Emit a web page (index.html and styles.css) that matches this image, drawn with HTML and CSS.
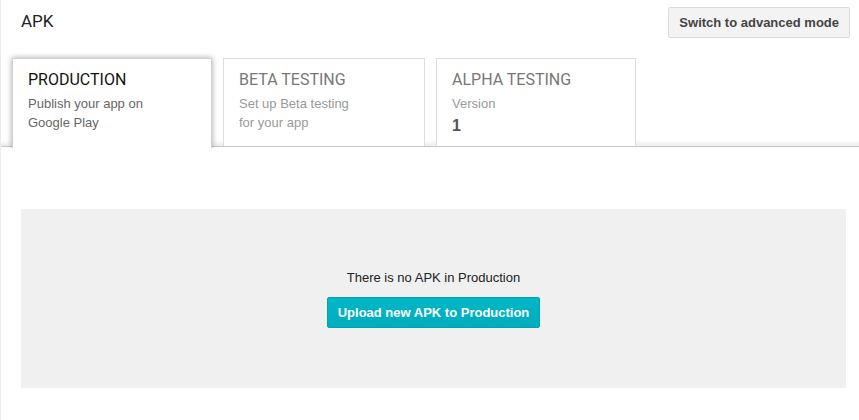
FILE: index.html
```html
<!DOCTYPE html>
<html>
<head>
<meta charset="utf-8">
<link rel="stylesheet" href="styles.css">
</head>
<body>
<div class="page">
  <div class="header">
    <h1 class="title">APK</h1>
    <button class="btn-switch">Switch to advanced mode</button>
  </div>
  <div class="tabs">
    <div class="tab active">
      <div class="tab-title">PRODUCTION</div>
      <div class="tab-sub">Publish your app on<br>Google Play</div>
    </div>
    <div class="tab beta">
      <div class="tab-title">BETA TESTING</div>
      <div class="tab-sub">Set up Beta testing<br>for your app</div>
    </div>
    <div class="tab">
      <div class="tab-title">ALPHA TESTING</div>
      <div class="tab-sub">Version</div>
      <div class="tab-num">1</div>
    </div>
  </div>
  <div class="content">
    <div class="panel">
      <div class="empty">There is no APK in Production</div>
      <button class="btn-upload">Upload new APK to Production</button>
    </div>
  </div>
</div>
</body>
</html>
```

FILE: styles.css
```css
html, body {
  margin: 0;
  padding: 0;
  background: #fff;
  font-family: "Liberation Sans", Arial, sans-serif;
}
.page {
  width: 858px;
  height: 420px;
  border-left: 1px solid #ececec;
  overflow: hidden;
}
.header {
  display: flex;
  justify-content: space-between;
  align-items: flex-start;
  padding: 7px 9px 0 20px;
  height: 51px;
}
.title {
  margin: 3px 0 0 0;
  font-family: Roboto, "Liberation Sans", sans-serif;
  font-weight: 400;
  font-size: 17px;
  color: #222;
  line-height: 22px;
}
.btn-switch {
  height: 31px;
  padding: 0 10px;
  background: #f3f3f3;
  border: 1px solid #dcdcdc;
  border-radius: 2px;
  font-family: "Liberation Sans", Arial, sans-serif;
  font-weight: bold;
  font-size: 13px;
  color: #444;
}
.tabs {
  display: flex;
  gap: 11px;
  padding-left: 11px;
  height: 88px;
  border-bottom: 1px solid #c8c8c8;
  background: linear-gradient(to bottom, rgba(0,0,0,0) 0, rgba(0,0,0,0) 82px, rgba(0,0,0,0.08) 88px);
  box-sizing: content-box;
}
.tab {
  width: 200px;
  border: 1px solid #dddddd;
  border-bottom: none;
  background: #fff;
  padding: 11px 15px 0 15px;
  box-sizing: border-box;
  height: 88px;
}
.tab.beta { width: 202px; }
.tab.active {
  width: 200px;
  height: 90px;
  border-color: #d0d0d0;
  box-shadow: 0 0 6px rgba(0,0,0,0.35);
  position: relative;
  z-index: 1;
  clip-path: inset(-8px -8px 0 -8px);
}
.tab-title {
  font-family: Roboto, "Liberation Sans", sans-serif;
  font-size: 16px;
  line-height: 20px;
  color: #777;
}
.active .tab-title { color: #111; }
.tab-sub {
  margin-top: 4px;
  font-size: 13px;
  line-height: 19px;
  color: #999;
}
.active .tab-sub { color: #666; }
.tab-num {
  margin-top: 3px;
  font-size: 16px;
  line-height: 20px;
  font-weight: bold;
  color: #555;
}
.content {
  padding: 62px 13px 0 20px;
}
.panel {
  height: 179px;
  background: #f0f0f0;
  display: flex;
  flex-direction: column;
  align-items: center;
  padding-top: 60px;
  box-sizing: border-box;
}
.empty {
  font-size: 13px;
  line-height: 18px;
  color: #222;
}
.btn-upload {
  margin-top: 10px;
  height: 31px;
  padding: 0 10px;
  background: linear-gradient(to bottom, #00b7c6, #00adbd);
  border: 1px solid #00a3b3;
  border-radius: 2px;
  font-family: "Liberation Sans", Arial, sans-serif;
  font-weight: bold;
  font-size: 13px;
  color: #fff;
}
```
